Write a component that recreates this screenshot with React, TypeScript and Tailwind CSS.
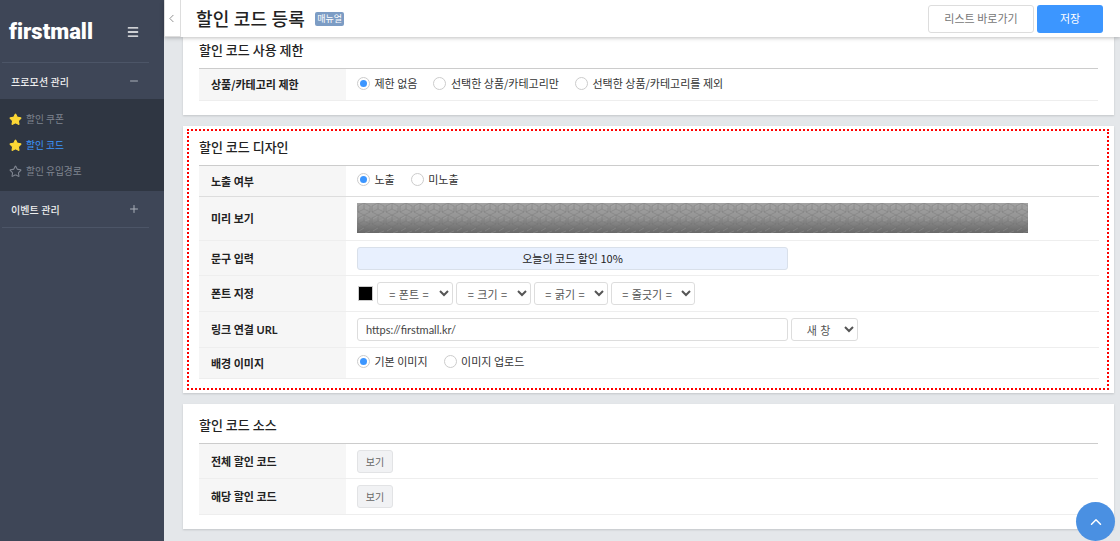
import React from 'react';
import { Star, ChevronLeft, ChevronUp, Menu, Minus, Plus } from 'lucide-react';

const font = { fontFamily: '"Noto Sans CJK KR", "Noto Sans", sans-serif' };

function Radio({ label, checked, className = '' }: { label: string; checked?: boolean; className?: string }) {
  return (
    <label className={`flex items-center gap-[4.5px] text-[11px] text-[#333] ${className}`}>
      <span className="flex h-[13px] w-[13px] items-center justify-center rounded-full border border-[#ccc] bg-white">
        {checked && <span className="h-[7px] w-[7px] rounded-full bg-[#3c96ff]" />}
      </span>
      {label}
    </label>
  );
}

function Row({ label, h, border = 'border-[#eee]', children }: { label: React.ReactNode; h: string; border?: string; children?: React.ReactNode }) {
  return (
    <div className={`flex border-b ${border} ${h}`}>
      <div className="flex w-[147px] shrink-0 items-center bg-[#f6f6f6] pl-[12px] text-[11px] font-bold text-[#222]">
        <span>{label}</span>
      </div>
      <div className="flex flex-1 items-center pl-[11px]">{children}</div>
    </div>
  );
}

function Sel({ label, w }: { label: string; w: string }) {
  return (
    <select className={`h-[23px] rounded-[3px] border border-[#ddd] bg-white text-center text-[11px] text-[#555] [word-spacing:1px] ${w}`} defaultValue={label}>
      <option>{label}</option>
    </select>
  );
}

function ViewBtn() {
  return (
    <button className="h-[23px] w-[36px] rounded-[3px] border border-[#e2e3e5] bg-[#f1f2f4] text-[10px] text-[#666]">보기</button>
  );
}

function Preview() {
  return (
    <svg className="mb-[1px] block h-[30px] w-[671px]" viewBox="0 0 671 30" preserveAspectRatio="none">
      <defs>
        <linearGradient id="shade" x1="0" y1="0" x2="0" y2="1">
          <stop offset="0" stopColor="#a2a2a2" />
          <stop offset="0.45" stopColor="#959595" />
          <stop offset="1" stopColor="#686868" />
        </linearGradient>
        <pattern id="cube" width="14" height="12" patternUnits="userSpaceOnUse">
          <path d="M7 0 L13 3 L13 9 L7 12 L1 9 L1 3 Z M7 0 L7 6 L1 9 M7 6 L13 9" fill="none" stroke="#6e6e6e" strokeWidth="0.7" strokeOpacity="0.5" />
          <path d="M2 4 L7 1 M8 6 L13 4" fill="none" stroke="#b4b4b4" strokeWidth="0.6" strokeOpacity="0.4" />
        </pattern>
      </defs>
      <rect width="671" height="30" fill="url(#shade)" />
      <rect width="671" height="30" fill="url(#cube)" />
    </svg>
  );
}

export default function App() {
  return (
    <div className="relative flex h-[541px] w-[1120px] overflow-hidden bg-[#e4e7ea]" style={font}>
      {/* 사이드바 */}
      <aside className="flex w-[164px] shrink-0 flex-col bg-[#3e4657]">
        <div className="flex h-[62px] items-center justify-between pl-[9px] pr-[24px] pt-[1px]">
          <span className="text-[22px] font-black leading-none text-white [font-variant-ligatures:none]" style={{ fontFamily: 'Roboto, sans-serif' }}>firstmall</span>
          <Menu size={14} strokeWidth={2.2} className="text-white" />
        </div>
        <div className="mx-[2px] w-[147px] border-t border-[#4c5567]" />
        <div className="flex h-[36px] items-center justify-between pl-[11px] pr-[24px] text-[10px] font-medium tracking-[0.1px] text-[#eee]">
          프로모션 관리
          <Minus size={12} className="text-[#aab0ba]" />
        </div>
        <div className="flex h-[92px] flex-col justify-center gap-[8px] bg-[#2f3642] pl-[9px] text-[9.7px] text-[#7f8590]">
          <div className="flex h-[18px] items-center gap-[4px]"><Star size={13} fill="#fdd835" stroke="#fdd835" />할인 쿠폰</div>
          <div className="flex h-[18px] items-center gap-[4px] text-[#3c96ff]"><Star size={13} fill="#fdd835" stroke="#fdd835" />할인 코드</div>
          <div className="flex h-[18px] items-center gap-[4px]"><Star size={13} stroke="#7f8590" />할인 유입경로</div>
        </div>
        <div className="flex h-[36px] items-center justify-between pl-[11px] pr-[24px] text-[10px] font-medium tracking-[0.1px] text-[#eee]">
          이벤트 관리
          <Plus size={12} className="text-[#aab0ba]" />
        </div>
        <div className="mx-[2px] w-[147px] border-t border-[#4c5567]" />
      </aside>

      {/* 본문 */}
      <main className="flex min-w-0 flex-1 flex-col">
        <header className="z-10 flex h-[37px] shrink-0 items-center bg-white pr-[17px] shadow-[0_1px_4px_rgba(0,0,0,0.25)]">
          <div className="flex h-[37px] w-[17px] items-center justify-center border border-t-0 border-[#ddd]">
            <ChevronLeft size={13} strokeWidth={1.5} className="-ml-[2px] text-[#777]" />
          </div>
          <h1 className="ml-[15px] text-[18px] font-medium tracking-[0.2px] text-[#222]">할인 코드 등록</h1>
          <span className="ml-[10px] flex h-[14px] w-[29px] items-center justify-center rounded-[2px] bg-[#7c9cc4] text-[9px] text-white">매뉴얼</span>
          <div className="ml-auto flex gap-[3px]">
            <button className="h-[28px] w-[106px] rounded-[3px] border border-[#ddd] bg-white text-[11px] text-[#777]">리스트 바로가기</button>
            <button className="h-[28px] w-[66px] rounded-[3px] bg-[#3c96ff] text-[11px] text-white">저장</button>
          </div>
        </header>

        <div className="flex flex-col gap-[11px] pl-[19px] pr-[6px]">
          <section className="h-[78px] bg-white px-[16px] shadow-[0_1px_2px_rgba(0,0,0,0.15)]">
            <h2 className="flex h-[31px] items-end pb-[12px] text-[13px] font-medium leading-none text-[#222]">할인 코드 사용 제한</h2>
            <div className="border-t border-[#ccc]">
              <Row label="상품/카테고리 제한" h="h-[32px]">
                <div className="flex items-center gap-[16px] pb-[3px]">
                  <Radio label="제한 없음" checked />
                  <Radio label="선택한 상품/카테고리만" />
                  <Radio label="선택한 상품/카테고리를 제외" />
                </div>
              </Row>
            </div>
          </section>

          <section className="h-[267px] bg-white pt-[3px] pl-[4px] pr-[5px] shadow-[0_1px_2px_rgba(0,0,0,0.15)]">
            <div className="h-[261px] border-2 border-dotted border-[#f00] pl-[10px] pr-[8px]">
              <h2 className="flex h-[34px] items-end pb-[12px] text-[13px] font-medium leading-none text-[#222]">할인 코드 디자인</h2>
              <div className="border-t border-[#ccc]">
                <Row label="노출 여부" h="h-[31px]" border="border-[#ddd]">
                  <div className="flex items-center gap-[16px] pb-[4px]">
                    <Radio label="노출" checked />
                    <Radio label="미노출" />
                  </div>
                </Row>
                <Row label="미리 보기" h="h-[44px]"><Preview /></Row>
                <Row label="문구 입력" h="h-[35px]">
                  <input readOnly value="오늘의 코드 할인 10%" className="h-[23px] w-[431px] rounded-[3px] border border-[#d9e0ea] bg-[#e8f0fe] text-center text-[11px] text-[#222]" />
                </Row>
                <Row label="폰트 지정" h="h-[36px]">
                  <div className="flex items-center gap-[3px]">
                    <span className="mx-[1px] h-[15px] w-[15px] border border-[#ccc] bg-black" />
                    <Sel label="= 폰트 =" w="w-[76px]" />
                    <Sel label="= 크기 =" w="w-[75px]" />
                    <Sel label="= 굵기 =" w="w-[74px]" />
                    <Sel label="= 줄긋기 =" w="w-[84px]" />
                  </div>
                </Row>
                <Row label={<>링크 연결 <span className="font-['Lato']">URL</span></>} h="h-[36px]">
                  <div className="flex items-center gap-[3px]">
                    <input readOnly value="https://firstmall.kr/" className="h-[23px] w-[431px] rounded-[3px] border border-[#ddd] bg-white pl-[8px] font-['Lato'] text-[11px] text-[#444]" />
                    <Sel label="새 창" w="w-[67px]" />
                  </div>
                </Row>
                <Row label="배경 이미지" h="h-[31px]">
                  <div className="flex items-center gap-[16px] pb-[4px]">
                    <Radio label="기본 이미지" checked />
                    <Radio label="이미지 업로드" />
                  </div>
                </Row>
              </div>
            </div>
          </section>

          <section className="h-[125px] bg-white px-[16px] shadow-[0_1px_2px_rgba(0,0,0,0.15)]">
            <h2 className="flex h-[39px] items-end pb-[12px] text-[13px] font-medium leading-none text-[#222]">할인 코드 소스</h2>
            <div className="border-t border-[#ccc]">
              <Row label="전체 할인 코드" h="h-[35px]"><ViewBtn /></Row>
              <Row label="해당 할인 코드" h="h-[36px]"><ViewBtn /></Row>
            </div>
          </section>
        </div>
      </main>

      <button className="absolute right-[5px] bottom-0 flex h-[39px] w-[39px] items-center justify-center rounded-full bg-[#4a90e2] text-white">
        <ChevronUp size={18} />
      </button>
    </div>
  );
}
